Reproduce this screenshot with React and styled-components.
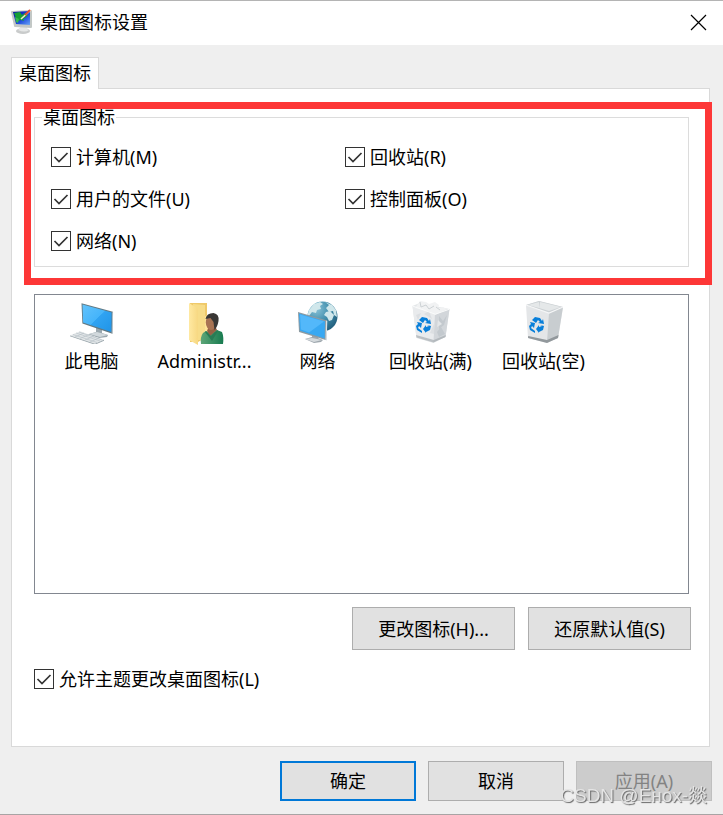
import React from "react";
import styled, { createGlobalStyle } from "styled-components";

const Global = createGlobalStyle`
  *, *::before, *::after { box-sizing: border-box; }
  body {
    margin: 0;
    background: #efefef;
    color: #000;
    font-family: "Noto Sans", "Noto Sans CJK SC", sans-serif;
    font-size: 18px;
    font-weight: 400;
    line-height: 24px;
  }
  button, input { font: inherit; color: inherit; }
`;

const Dialog = styled.main`
  display: flex;
  flex-direction: column;
  min-height: 100vh;
  border-top: 1px solid #b4b4b4;
  border-bottom: 1px solid #a8a4a4;
  background: #efefef;
`;

const TitleBar = styled.header`
  display: flex;
  align-items: center;
  gap: 6px;
  height: 44px;
  padding: 0 16px 2px 10px;
  background: #fff;
`;

const Title = styled.h1`
  flex: 1;
  margin: 0;
  font-size: 18px;
  font-weight: inherit;
`;

const CloseButton = styled.button`
  display: flex;
  padding: 0;
  border: 0;
  background: none;
`;

const TabList = styled.div`
  display: flex;
  margin: 12px 11px 0;
`;

const Tab = styled.button`
  z-index: 1;
  height: 32px;
  margin-bottom: -1px;
  padding: 0 7px 2px;
  border: 1px solid #d9d9d9;
  border-bottom: 0;
  background: #fff;
`;

const Panel = styled.section`
  position: relative;
  flex: 1;
  display: flex;
  flex-direction: column;
  margin: 0 13px 0 11px;
  padding: 19px 20px 20px 22px;
  border: 1px solid #d9d9d9;
  background: #fff;
`;

const Highlight = styled.div`
  position: absolute;
  inset: -6px -23px -18px -10px;
  border: 7px solid #fd3737;
  pointer-events: none;
`;

const GroupArea = styled.div`
  position: relative;
`;

const Group = styled.fieldset`
  display: grid;
  grid-template-columns: 6fr 7fr;
  row-gap: 18px;
  margin: 0;
  padding: 19px 0 13px 16px;
  border: 1px solid #dcdcdc;
`;

const Legend = styled.legend`
  margin-left: -9px;
  padding: 0 1px;
  line-height: 18px;
`;

const CheckLabel = styled.label`
  display: flex;
  align-items: center;
  gap: 5px;
`;

const CheckFrame = styled.span`
  display: grid;
  width: 20px;
  height: 20px;

  & > * { grid-area: 1 / 1; }
  svg { pointer-events: none; }
  input:not(:checked) + svg { visibility: hidden; }
`;

const CheckInput = styled.input`
  appearance: none;
  width: 20px;
  height: 20px;
  margin: 0;
  border: 1px solid #333;
  background: #fff;
`;

const IconList = styled.ul`
  flex: 1;
  display: grid;
  grid-template-columns: repeat(auto-fill, 113px);
  align-content: start;
  min-height: 300px;
  margin: 27px 0 13px;
  padding: 5px 0;
  border: 1px solid #828790;
  list-style: none;
`;

const IconItem = styled.li`
  display: flex;
  flex-direction: column;
  align-items: center;
  gap: 5px;
`;

const ActionRow = styled.div`
  display: flex;
  justify-content: flex-end;
  gap: 13px;
  margin-right: -2px;
`;

const ThemeRow = styled.div`
  margin: 17px 0 35px;
`;

const Footer = styled.footer`
  display: flex;
  justify-content: flex-end;
  gap: 12px;
  padding: 14px 11px 13px;
`;

const PushButton = styled.button`
  width: ${(p) => (p.$wide ? 163 : 136)}px;
  height: ${(p) => (p.$wide ? 43 : 40)}px;
  padding: 0;
  border: ${(p) => (p.$primary ? "2px solid #0078d7" : "1px solid #adadad")};
  background: #e1e1e1;

  &:disabled {
    border-color: #bfbfbf;
    background: #ccc;
    color: #838383;
  }
`;

const Watermark = styled.div`
  position: fixed;
  right: 16px;
  bottom: 7px;
  color: #e4e4e4;
  font-family: "Liberation Sans", "Noto Sans CJK SC", sans-serif;
  font-size: 19px;
  text-shadow: 1px 1px 1px #666;
  pointer-events: none;
`;

function Check({ children }) {
  return (
    <CheckLabel>
      <CheckFrame>
        <CheckInput type="checkbox" defaultChecked />
        <svg width="20" height="20" fill="none" stroke="#333" strokeWidth="1.7" aria-hidden="true">
          <path d="M3.5 10 8 14.5 16.5 6" />
        </svg>
      </CheckFrame>
      {children}
    </CheckLabel>
  );
}

function AppIcon() {
  return (
    <svg width="24" height="26" aria-hidden="true">
      <defs>
        <linearGradient id="appScreen" x1="0" y1="0" x2="1" y2="1">
          <stop offset="0" stopColor="#0712a0" />
          <stop offset=".55" stopColor="#1a45dc" />
          <stop offset="1" stopColor="#69a5f4" />
        </linearGradient>
      </defs>
      <ellipse cx="13" cy="22" rx="7" ry="3" fill="#c9cbcb" />
      <path d="M8 21q2-1 2-3h7q0 3 2 3-4 3-11 0Z" fill="#e6e8e8" />
      <path d="m2 2 19-1q1 0 1 1v16q0 1-1 1L5 18q-1 0-1-1L1 3q0-1 1-1Z" fill="#c3c8c6" />
      <path d="m3 3 17-1v14L6 15Z" fill="url(#appScreen)" />
      <path d="m4 4 6-1 2 3 3-2 3 2-3 3-2 1 1 2-3-1-3 1-2-3Z" fill="#159f35" />
      <path d="m5 8 4 2-1 4-2-1Z" fill="#35b94e" />
      <path d="m11 10 10-9" stroke="#f3e5d0" strokeWidth="1.6" />
      <path d="m15 6 5-5" stroke="#dd4c31" strokeWidth="1.8" />
    </svg>
  );
}

function ComputerIcon() {
  return (
    <svg width="48" height="44" aria-hidden="true">
      <defs>
        <linearGradient id="pcScreen" x1="0" y1="0" x2="1" y2="1">
          <stop offset="0" stopColor="#62c3fc" />
          <stop offset=".5" stopColor="#45b4fa" />
          <stop offset=".51" stopColor="#30a3f2" />
          <stop offset="1" stopColor="#2094e7" />
        </linearGradient>
      </defs>
      <path d="m21 34 7-2v-5l6 2v4l6 2-1 2-8 1-10-3Z" fill="#9ba7ae" />
      <path d="m21 34 8-2 11 3-8 2Z" fill="#d1d8dc" />
      <path d="m13.5 3.2 31.4 8.6-.5 22-30-10.3Z" fill="#627983" />
      <path d="m14.5 4.4 29.1 8-.2 19.7-28.3-9.5Z" fill="url(#pcScreen)" />
      <path d="m44.3 12 .8.5-.4 21-1 .1Z" fill="#bac4c9" />
      <path d="m2 35.5 10-4.2 24 8.4-9 4Z" fill="#e2e6e8" />
      <path d="m2 35.5 25 8.2 9-4v1l-9 4-25-8.5Z" fill="#98a4aa" />
      <path d="m5 34.5 24 8M8 33l24 8M11 32l23 8M7 37l9-4M12 38.5l9-4M17 40l9-4M22 42l9-4" stroke="#b3bec4" strokeWidth=".6" />
    </svg>
  );
}

function UserFolderIcon() {
  return (
    <svg width="48" height="44" overflow="visible" aria-hidden="true">
      <defs>
        <linearGradient id="folderFlap">
          <stop stopColor="#ffe9a2" />
          <stop offset="1" stopColor="#f7d882" />
        </linearGradient>
        <linearGradient id="coat">
          <stop stopColor="#5da678" />
          <stop offset="1" stopColor="#187b50" />
        </linearGradient>
      </defs>
      <path d="M9 3h17v34l-9 5H9Z" fill="#efc96a" />
      <path d="m12 4 12 1v35H12Z" fill="#f7dc88" />
      <path d="m24 16 4-1v22l-4 2Z" fill="#ffe397" />
      <path d="m8 3 8 5q1 1 1 3v34l-9-5Z" fill="url(#folderFlap)" />
      <path d="M25 31q6 4 11-1l5 2q2 5 1 12H20q-1-7 2-11Z" fill="url(#coat)" />
      <path d="m26 31 2-5h6l2 4-7 6Z" fill="#956144" />
      <path d="m25 31 5 5 6-6 1 1-6 10-7-9Z" fill="#287b55" />
      <ellipse cx="30" cy="22.5" rx="5.2" ry="7.5" fill="#a87353" />
      <path d="M24.5 19q1-6 8-6 6 1 5 8-1 6-4 9l-1-8-3-4Z" fill="#393735" />
    </svg>
  );
}

function NetworkIcon() {
  return (
    <svg width="48" height="44" aria-hidden="true">
      <defs>
        <radialGradient id="globe" cx=".3" cy=".25" r=".8">
          <stop stopColor="#8ac3d8" />
          <stop offset=".55" stopColor="#418eac" />
          <stop offset="1" stopColor="#24617f" />
        </radialGradient>
      </defs>
      <circle cx="28.5" cy="16.5" r="15" fill="url(#globe)" />
      <path d="m15 10 5-6 6-2 3 2-3 2 1 3-4 1-1 3-4-1-3 4-2 1ZM31 2l7 3 4 5 1 7-3-2-1-4-4 1-3-4 3-3ZM32 12l4-1 4 4-2 5-3 1-2-4-3-2Z" fill="#d0e7eb" />
      <path d="m11 39 7-2v-4l6 2v3l5 2-2 2-7 1Z" fill="#9ea7ae" />
      <path d="m11 39 7-1 10 2-8 2Z" fill="#d5dadd" />
      <path d="m4 12 29 8.5-.6 19.8L5 32Z" fill="#8d9ba2" />
      <path d="m32 20.5 1.3.4-.6 19.4-1.2-.2Z" fill="#d9e0e3" />
      <path d="m5 13.5 26 7.7-.3 17.4L6 30.7Z" fill="#38a8f2" />
      <path d="m6 14.5 24 7-15 11-8-3Z" fill="#5cbefc" opacity=".75" />
    </svg>
  );
}

function RecycleMark() {
  return (
    <g fill="#087fda">
      <path d="m12 20 3-3 5 1 2 3 1-2 1 5-6-1 2-1-2-2-2 3Z" />
      <path d="m10 22 5 1-1 5-2-2-1 2 4 3v2l-5-3-1-4 2-2Z" />
      <path d="m20 25 4 1-1 4-4 2v1l-3-4 3-4v2l3-1Z" />
    </g>
  );
}

function BinIcon({ full }) {
  return (
    <svg width="48" height="44" aria-hidden="true">
      {full ? (
        <>
          <path d="m5.5 6 7-3 30 6-4 28-12 6-17-5Z" fill="#e4e7e9" />
          <path d="m5.5 6 4 31.7 17 4.7 2-28Z" fill="#e9ebed" />
          <path d="m28 14 14.5-5-4 28-12 5Z" fill="#d2d6da" />
          <path d="m8 8 5-7 6 1 3 2 6-2 4 3-1 3 5-1 4 2-12 6-8-4Z" fill="#f1f2f3" />
          <path d="m13 2 1 5 5-2 3 4 5-3m2 1 4 3" fill="none" stroke="#cdd2d5" strokeWidth="1" />
          <path d="m17 14 5-3 3 8Zm-8 1 5-2-3 7Zm14 18 4-9v10Z" fill="#dcdfe2" />
          <path d="m32 16 4 5 4-6-3 10-5 4Zm-2 16 4-5 4 7-6 3Z" fill="#c3c9ce" />
          <path d="m31 20 4 4-5 3Z" fill="#e3e6e8" />
          <path d="m9 35 17.8 5 12-5-.3 2-12 5.5-17-5Z" fill="#a3a9ae" opacity=".65" />
          <path d="m5.5 6 22.8 8.2 14.2-5" fill="none" stroke="#fafbfb" strokeWidth="1" />
        </>
      ) : (
        <>
          <path d="m6 5 13-4 24 6-5 31-11 5-19-5Z" fill="#e4e6e8" />
          <path d="m6 5 13-4 24 6-14 6Z" fill="#cbd0d3" />
          <path d="m8 5 11-3v6Zm12-3 21 5-12 4-10-3Z" fill="#e5e8e9" />
          <path d="m29 13 14-6-5 31-11 4Z" fill="#c8cdd0" />
          <path d="m8.2 36 18.8 4 11.5-5-.5 3-11 5-19-5Z" fill="#92989c" />
          <path d="m6 5 23 8 14-6" fill="none" stroke="#f5f6f7" strokeWidth="1.2" />
        </>
      )}
      <RecycleMark />
    </svg>
  );
}

export default function App() {
  return (
    <>
      <Global />
      <Dialog>
        <TitleBar>
          <AppIcon />
          <Title>桌面图标设置</Title>
          <CloseButton type="button" aria-label="关闭">
            <svg width="17" height="17" stroke="#000" strokeWidth="1.2" aria-hidden="true">
              <path d="m1 1 15 15M16 1 1 16" />
            </svg>
          </CloseButton>
        </TitleBar>
        <TabList role="tablist">
          <Tab type="button" role="tab" aria-selected="true">桌面图标</Tab>
        </TabList>
        <Panel role="tabpanel">
          <GroupArea>
            <Group>
              <Legend>桌面图标</Legend>
              <Check>计算机(M)</Check>
              <Check>回收站(R)</Check>
              <Check>用户的文件(U)</Check>
              <Check>控制面板(O)</Check>
              <Check>网络(N)</Check>
            </Group>
            <Highlight />
          </GroupArea>
          <IconList>
            <IconItem><ComputerIcon />此电脑</IconItem>
            <IconItem><UserFolderIcon />Administr...</IconItem>
            <IconItem><NetworkIcon />网络</IconItem>
            <IconItem><BinIcon full />回收站(满)</IconItem>
            <IconItem><BinIcon />回收站(空)</IconItem>
          </IconList>
          <ActionRow>
            <PushButton type="button" $wide>更改图标(H)...</PushButton>
            <PushButton type="button" $wide>还原默认值(S)</PushButton>
          </ActionRow>
          <ThemeRow>
            <Check>允许主题更改桌面图标(L)</Check>
          </ThemeRow>
        </Panel>
        <Footer>
          <PushButton type="button" $primary>确定</PushButton>
          <PushButton type="button">取消</PushButton>
          <PushButton type="button" disabled>应用(A)</PushButton>
        </Footer>
        <Watermark>CSDN @Eнох-燚</Watermark>
      </Dialog>
    </>
  );
}
